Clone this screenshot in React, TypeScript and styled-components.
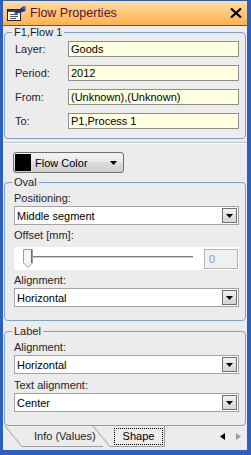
import { Fragment } from 'react';
import styled, { createGlobalStyle } from 'styled-components';

const GlobalStyle = createGlobalStyle`
  html, body {
    margin: 0;
    padding: 0;
    background: #ffffff;
  }
  body {
    font-family: 'Liberation Sans', Arial, sans-serif;
    font-size: 11px;
    color: #1e1e1e;
  }
  * {
    box-sizing: border-box;
  }
`;

const flowRows = [
  { label: 'Layer:', value: 'Goods' },
  { label: 'Period:', value: '2012' },
  { label: 'From:', value: '(Unknown),(Unknown)' },
  { label: 'To:', value: 'P1,Process 1' },
];

const DropArrow = () => (
  <svg width='7' height='4' viewBox='0 0 7 4'>
    <polygon points='0,0 7,0 3.5,4' fill='#000' />
  </svg>
);

const ComboBox = ({ value }: { value: string }) => (
  <Combo>
    <ComboText>{value}</ComboText>
    <ComboButton>
      <DropArrow />
    </ComboButton>
  </Combo>
);

const App = () => {
  return (
    <>
      <GlobalStyle />
      <Window>
        <TitleBar>
          <svg width='19' height='15' viewBox='0 0 19 15'>
            <rect x='0.5' y='3.5' width='13' height='11' fill='#fff' stroke='#222' />
            <rect x='1' y='4' width='12' height='2' fill='#444' />
            <line x1='3' y1='8.5' x2='11' y2='8.5' stroke='#555' />
            <line x1='3' y1='10.5' x2='11' y2='10.5' stroke='#555' />
            <line x1='3' y1='12.5' x2='9' y2='12.5' stroke='#555' />
            <polygon points='7,7 17,0 18.5,5 9,8' fill='#1f2f8a' />
            <polygon points='14,1.5 18.5,0 18.5,5' fill='#4050c0' />
          </svg>
          <TitleText>Flow Properties</TitleText>
          <CloseIcon width='12' height='10' viewBox='0 0 12 10'>
            <path d='M1 0.5 L11 9.5 M11 0.5 L1 9.5' stroke='#000' strokeWidth='2.2' />
          </CloseIcon>
        </TitleBar>
        <Body>
          <TopPanel>
            <Group>
              <Legend>F1,Flow 1</Legend>
              <GroupBody $pad='2px 6px 9px 10px'>
                <PropGrid>
                  {flowRows.map((row) => (
                    <Fragment key={row.label}>
                      <PropLabel>{row.label}</PropLabel>
                      <PropInput>{row.value}</PropInput>
                    </Fragment>
                  ))}
                </PropGrid>
              </GroupBody>
            </Group>
          </TopPanel>
          <Divider />
          <LowerPanel>
            <ColorButton>
              <Swatch />
              <ColorButtonText>Flow Color</ColorButtonText>
              <DropArrow />
            </ColorButton>
            <Group $top={3}>
              <Legend>Oval</Legend>
              <GroupBody $pad='3px 6px 13px 9px'>
                <FieldLabel>Positioning:</FieldLabel>
                <ComboBox value='Middle segment' />
                <FieldLabel $top={4}>Offset [mm]:</FieldLabel>
                <SliderPanel>
                  <SliderTrack>
                    <Thumb width='10' height='19' viewBox='0 0 10 19'>
                      <path d='M0.5 0.5 H9.5 V14 L5 18.5 L0.5 14 Z' fill='#f4f4f4' stroke='#9a9a9a' />
                      <line x1='8.5' y1='1' x2='8.5' y2='14' stroke='#6a6a6a' />
                    </Thumb>
                  </SliderTrack>
                  <NumberBox>0</NumberBox>
                </SliderPanel>
                <FieldLabel $top={4}>Alignment:</FieldLabel>
                <ComboBox value='Horizontal' />
              </GroupBody>
            </Group>
            <Group $top={4}>
              <Legend>Label</Legend>
              <GroupBody $pad='3px 6px 13px 9px'>
                <FieldLabel>Alignment:</FieldLabel>
                <ComboBox value='Horizontal' />
                <FieldLabel $top={5}>Text alignment:</FieldLabel>
                <ComboBox value='Center' />
              </GroupBody>
            </Group>
          </LowerPanel>
          <TabBar>
            <TabOutline width='244' height='23' viewBox='0 0 244 23'>
              <polyline points='2,0 19,20.5 100,20.5' fill='none' stroke='#9c9c9c' />
              <polyline points='90,0 107,20.5 161.5,20.5 161.5,0' fill='none' stroke='#9c9c9c' />
            </TabOutline>
            <Tab>Info (Values)</Tab>
            <ActiveTab>Shape</ActiveTab>
            <TabScroll>
              <svg width='5' height='7' viewBox='0 0 5 7'>
                <polygon points='5,0 5,7 0,3.5' fill='#000' />
              </svg>
              <svg width='5' height='7' viewBox='0 0 5 7'>
                <polygon points='0,0 0,7 5,3.5' fill='#9a9a9a' />
              </svg>
            </TabScroll>
          </TabBar>
        </Body>
      </Window>
    </>
  );
};

export default App;

const Window = styled.div`
  width: 251px;
  height: 455px;
  display: flex;
  flex-direction: column;
  background: #2d5fbe;
  padding: 1px 4px 5px 3px;
`;

const TitleBar = styled.div`
  height: 24px;
  margin-bottom: 1px;
  display: flex;
  align-items: center;
  padding: 0 4px 0 4px;
  background: linear-gradient(#ffdfa6, #ffc678 50%, #ffb153);
`;

const TitleText = styled.span`
  margin-left: 4px;
  font-size: 12.5px;
  color: #5a1229;
  flex: 1;
`;

const CloseIcon = styled.svg`
  margin-right: 1px;
`;

const Body = styled.div`
  flex: 1;
  display: flex;
  flex-direction: column;
  background: #ececec;
  min-height: 0;
`;

const TopPanel = styled.div`
  padding: 0 1px 3px 1px;
`;

const Divider = styled.div`
  height: 2px;
  border-top: 1px solid #c4c4c4;
  border-bottom: 1px solid #fafafa;
`;

const LowerPanel = styled.div`
  padding: 8px 1px 0 1px;
  display: flex;
  flex-direction: column;
`;

const Group = styled.fieldset<{ $top?: number }>`
  margin: ${(p) => p.$top ?? 0}px 0 0 0;
  padding: 0;
  min-width: 0;
  border: 1px solid #7c9fd6;
  border-radius: 4px;
`;

const Legend = styled.legend`
  margin-left: 7px;
  padding: 0 2px;
  line-height: 13px;
  font-size: 11px;
  color: #1e1e1e;
`;

const GroupBody = styled.div<{ $pad: string }>`
  display: flex;
  flex-direction: column;
  padding: ${(p) => p.$pad};
`;

const PropGrid = styled.div`
  display: grid;
  grid-template-columns: 53px 1fr;
  row-gap: 8px;
  align-items: center;
`;

const PropLabel = styled.span`
  line-height: 16px;
  color: #1e1e1e;
`;

const PropInput = styled.div`
  height: 16px;
  border: 1px solid #8d8d8d;
  background: #ffffe1;
  padding-left: 2px;
  line-height: 14px;
  color: #000;
  white-space: nowrap;
  overflow: hidden;
`;

const ColorButton = styled.div`
  align-self: flex-start;
  margin-left: 9px;
  width: 111px;
  height: 21px;
  padding: 1px 6px 1px 1px;
  display: flex;
  align-items: center;
  border: 1px solid #707070;
  border-radius: 3px;
  background: linear-gradient(#f3f3f3, #ebebeb 45%, #dddddd 50%, #cfcfcf);
`;

const Swatch = styled.span`
  width: 16px;
  height: 17px;
  background: #000;
`;

const ColorButtonText = styled.span`
  flex: 1;
  margin-left: 4px;
  color: #000;
`;

const FieldLabel = styled.div<{ $top?: number }>`
  margin-top: ${(p) => p.$top ?? 0}px;
  margin-bottom: 1px;
  line-height: 13px;
  color: #1e1e1e;
`;

const Combo = styled.div`
  height: 19px;
  display: flex;
  align-items: center;
  padding: 0 1px 0 1px;
  border: 1px solid #a3a3a3;
  background: #ffffff;
`;

const ComboText = styled.span`
  flex: 1;
  padding-left: 1px;
  color: #000;
`;

const ComboButton = styled.span`
  width: 15px;
  height: 15px;
  display: flex;
  align-items: center;
  justify-content: center;
  border: 1px solid #707070;
  background: linear-gradient(#f2f2f2, #e2e2e2 50%, #d6d6d6);
`;

const SliderPanel = styled.div`
  margin-top: 4px;
  height: 23px;
  display: flex;
  align-items: center;
  gap: 11px;
  padding: 0 1px 0 9px;
  background: #ffffff;
`;

const SliderTrack = styled.div`
  position: relative;
  flex: 1;
  height: 23px;
  &::before {
    content: '';
    position: absolute;
    left: 4px;
    right: 0;
    top: 9px;
    height: 1px;
    background: #7d7d7d;
    border-bottom: 1px solid #c9c9c9;
  }
`;

const Thumb = styled.svg`
  position: absolute;
  left: 0;
  top: 2px;
`;

const NumberBox = styled.div`
  width: 34px;
  height: 20px;
  border: 1px solid #b4b4b4;
  background: #f0f0f0;
  padding-left: 4px;
  line-height: 18px;
  color: #8a9bbd;
`;

const TabBar = styled.div`
  position: relative;
  flex: 1;
  display: flex;
  align-items: center;
  padding: 0 6px 3px 31px;
`;

const TabOutline = styled.svg`
  position: absolute;
  left: 0;
  top: 0;
  pointer-events: none;
`;

const Tab = styled.span`
  position: relative;
  line-height: 13px;
  color: #1e1e1e;
`;

const ActiveTab = styled.span`
  position: relative;
  margin-left: 18px;
  padding: 1px 8px;
  line-height: 13px;
  border: 1px dotted #000;
  color: #000;
`;

const TabScroll = styled.span`
  margin-left: auto;
  display: flex;
  align-items: center;
  gap: 11px;
`;
